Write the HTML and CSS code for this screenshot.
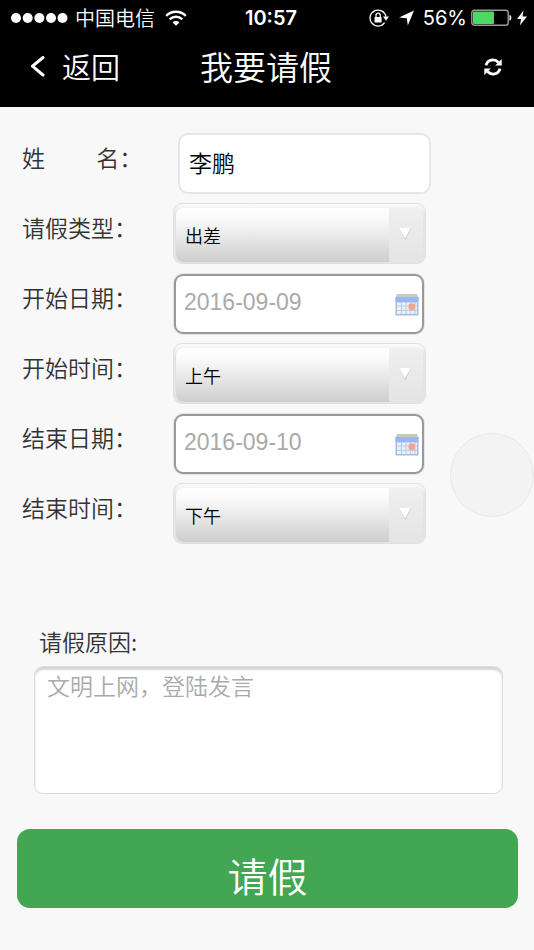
FILE: index.html
```html
<!DOCTYPE html>
<html lang="zh-CN">
<head>
<meta charset="utf-8">
<meta name="viewport" content="width=device-width, initial-scale=1">
<title>我要请假</title>
<link rel="stylesheet" href="styles.css">
</head>
<body>
<header class="top">
  <div class="status">
    <div class="status-left">
      <svg class="dots" width="57" height="12" viewBox="0 0 57 12" fill="#fff" aria-hidden="true"><circle cx="5" cy="6" r="5"/><circle cx="16.700" cy="6" r="5"/><circle cx="28.400" cy="6" r="5"/><circle cx="40" cy="6" r="5"/><circle cx="51.500" cy="6" r="5"/></svg>
      <span class="carrier">中国电信</span>
      <svg class="wifi" width="22" height="16" viewBox="0 0 22 16" fill="none" stroke="#fff" stroke-width="2.400" aria-hidden="true"><path d="M1.200 5.800a14 14 0 0 1 19.600 0M4.700 9.300a9 9 0 0 1 12.600 0"/><path d="M11 15.800 7.600 12.400a4.800 4.800 0 0 1 6.800 0z" fill="#fff" stroke="none"/></svg>
    </div>
    <time class="clock">10:57</time>
    <div class="status-right">
      <svg class="lock" width="20" height="18" viewBox="0 0 20 18" fill="none" stroke="#fff" aria-hidden="true"><path d="M15.600 13.700A8 8 0 1 1 16.900 7.500" stroke-width="1.300"/><path d="M14 7.500h6l-3 4.200z" fill="#fff" stroke="none"/><rect x="5.600" y="8" width="7" height="5.500" rx=".6" fill="#fff" stroke="none"/><path d="M7 8.500V6.300a2.100 2.100 0 0 1 4.200 0v2.200" stroke-width="1.300"/></svg>
      <svg class="arrow" width="15" height="16" viewBox="0 0 15 16" fill="#fff" aria-hidden="true"><path d="M15 .5 8.800 15.500 7.800 8.200 0 7.500z"/></svg>
      <span class="percent">56%</span>
      <svg class="battery" width="41" height="18" viewBox="0 0 41 18" aria-hidden="true"><rect x=".8" y="1.300" width="36.400" height="15" rx="2.500" fill="none" stroke="#9a9a9a" stroke-width="1.400"/><rect x="2" y="2.500" width="21" height="12.500" rx="1" fill="#4cd964"/><path d="M38.500 5.800c2.400.6 2.400 5.400 0 6z" fill="#fff"/></svg>
      <svg class="bolt" width="10" height="16" viewBox="0 0 10 16" fill="#fff" aria-hidden="true"><path d="M6.500.500 0 9h4.200L2.800 15.500 10 6.500H5.500z"/></svg>
    </div>
  </div>
  <nav class="nav">
    <a class="back" href="#">
      <svg width="15" height="22" viewBox="0 0 15 22" fill="none" stroke="#fff" stroke-width="3" stroke-linecap="round" stroke-linejoin="round" aria-hidden="true"><path d="M13 2.500 2.500 11.200 13 20"/></svg>
      <span>返回</span>
    </a>
    <h1 class="title">我要请假</h1>
    <button class="refresh" type="button" aria-label="刷新">
      <svg width="18" height="18" viewBox="0 0 18 18" aria-hidden="true"><g fill="none" stroke="#fff" stroke-width="2.800"><path d="M2 7.300C3.500 1.500 10.500.2 14.500 4.500"/><path d="M16 10.700C14.500 16.500 7.500 17.800 3.500 13.500"/></g><path d="M17.700 1v6.500h-6.500zM.300 17v-6.500h6.500z" fill="#fff"/></svg>
    </button>
  </nav>
</header>

<main>
  <form class="form">
    <div class="row">
      <label class="label" for="name">姓&nbsp;&nbsp;&nbsp;&nbsp;&nbsp;&nbsp;&nbsp;&nbsp;&nbsp;&nbsp;名：</label>
      <input class="name" id="name" type="text" value="李鹏">
    </div>
    <div class="row">
      <label class="label" for="type">请假类型：</label>
      <div class="picker">
        <select id="type"><option>出差</option></select>
        <span class="drop"><svg width="14" height="14" viewBox="0 0 14 14" aria-hidden="true"><path d="M1 1h12.500L7.300 13z" fill="#c4c4c4"/><path d="M1 1h12L7 11.500z" fill="#fff"/></svg></span>
      </div>
    </div>
    <div class="row">
      <label class="label" for="start-date">开始日期：</label>
      <div class="date">
        <input id="start-date" type="text" value="2016-09-09">
        <button type="button" aria-label="选择开始日期"><svg width="24" height="23" viewBox="0 0 24 23" aria-hidden="true"><path d="M2 1h20l1.500 4H.5z" fill="#c9c9c6"/><rect x=".5" y="4" width="23" height="18.500" fill="#a9bcdb"/><rect x=".5" y="4" width="23" height="5" fill="#9ab6f3"/><path d="M2 9.500h20V21H2z" fill="#eaf1fa"/><path d="M6.500 9v12M11 9v12M15.500 9v12M20 9v12M2 13h20M2 17.500h20" stroke="#bccde6" stroke-width="1.200"/><rect x="13.500" y="10.500" width="6.500" height="6.500" rx="2" fill="#f0a48c"/></svg></button>
      </div>
    </div>
    <div class="row">
      <label class="label" for="start-time">开始时间：</label>
      <div class="picker">
        <select id="start-time"><option>上午</option><option>下午</option></select>
        <span class="drop"><svg width="14" height="14" viewBox="0 0 14 14" aria-hidden="true"><path d="M1 1h12.500L7.300 13z" fill="#c4c4c4"/><path d="M1 1h12L7 11.500z" fill="#fff"/></svg></span>
      </div>
    </div>
    <div class="row">
      <label class="label" for="end-date">结束日期：</label>
      <div class="date">
        <input id="end-date" type="text" value="2016-09-10">
        <button type="button" aria-label="选择结束日期"><svg width="24" height="23" viewBox="0 0 24 23" aria-hidden="true"><path d="M2 1h20l1.500 4H.5z" fill="#c9c9c6"/><rect x=".5" y="4" width="23" height="18.500" fill="#a9bcdb"/><rect x=".5" y="4" width="23" height="5" fill="#9ab6f3"/><path d="M2 9.500h20V21H2z" fill="#eaf1fa"/><path d="M6.500 9v12M11 9v12M15.500 9v12M20 9v12M2 13h20M2 17.500h20" stroke="#bccde6" stroke-width="1.200"/><rect x="13.500" y="10.500" width="6.500" height="6.500" rx="2" fill="#f0a48c"/></svg></button>
      </div>
    </div>
    <div class="row">
      <label class="label" for="end-time">结束时间：</label>
      <div class="picker">
        <select id="end-time"><option>下午</option><option>上午</option></select>
        <span class="drop"><svg width="14" height="14" viewBox="0 0 14 14" aria-hidden="true"><path d="M1 1h12.500L7.300 13z" fill="#c4c4c4"/><path d="M1 1h12L7 11.500z" fill="#fff"/></svg></span>
      </div>
    </div>
    <div class="reason">
      <label for="reason">请假原因:</label>
      <textarea id="reason" placeholder="文明上网，登陆发言"></textarea>
    </div>
    <button class="submit" type="submit">请假</button>
  </form>
</main>
<div class="assist" aria-hidden="true"></div>
</body>
</html>
```
FILE: styles.css
```css
* {
  box-sizing: border-box;
}

body {
  margin: 0;
  min-height: 100vh;
  position: relative;
  background: #f8f8f8;
  color: #333;
  font-family: "Noto Sans CJK SC", sans-serif;
  font-size: 23px;
  font-weight: 350;
}

input,
select,
textarea,
button {
  margin: 0;
  font: inherit;
  appearance: none;
}

svg {
  display: block;
  flex: none;
}

.top {
  height: 107px;
  background: #000;
  color: #fff;
}

/* Status bar */

.status {
  display: grid;
  grid-template-columns: 1fr auto 1fr;
  align-items: center;
  height: 35px;
  padding: 0 7px 0 11px;
  font-size: 20px;
}

.status-left,
.status-right {
  display: flex;
  align-items: center;
}

.status-right {
  justify-content: flex-end;
}

.carrier {
  margin: 0 10px 0 7px;
}

.clock {
  padding-left: 4px;
  font-family: Inter, sans-serif;
  font-weight: 600;
}

.percent {
  margin: 0 4px 0 9px;
  font-family: Inter, sans-serif;
  font-weight: 400;
}

.arrow {
  margin-left: 10px;
}

.bolt {
  margin-left: 5px;
}

/* Title bar */

.nav {
  display: grid;
  grid-template-columns: 1fr auto 1fr;
  align-items: center;
  height: 62px;
  padding: 0 32px 0 30px;
}

.back {
  display: flex;
  align-items: center;
  gap: 17px;
  color: #fff;
  font-size: 29px;
  text-decoration: none;
}

.title {
  margin: 0;
  font-size: 33px;
  font-weight: inherit;
}

.refresh {
  justify-self: end;
  padding: 2px 0 0;
  border: 0;
  background: none;
}

/* Form */

.form {
  padding: 26px 16px 42px 17px;
}

.row {
  display: grid;
  grid-template-columns: 151px minmax(0, 1fr);
  align-items: start;
  height: 70px;
  padding: 0 92px 0 5px;
}

.label {
  line-height: 48px;
}

.name {
  width: 100%;
  height: 61px;
  padding: 0 9px 3px;
  position: relative;
  left: 5px;
  border: 2px solid #e6e6e6;
  border-radius: 10px;
  background: #fff;
  color: #000;
}

.picker {
  display: flex;
  height: 61px;
  padding: 4px 2px 1px;
  border: 1px solid #e0e0e0;
  border-radius: 9px;
  background: linear-gradient(#fbfbfb, #e4e4e4 20%);
}

.picker select {
  flex: 1;
  min-width: 0;
  padding: 0 9px;
  border: 0;
  border-radius: 8px 0 0 8px;
  background: linear-gradient(#fff, #fafafa 20%, #cecece);
  color: #000;
  font-size: 18px;
}

.drop {
  display: grid;
  place-items: center;
  width: 34px;
  padding: 0 3px 3px 0;
  border-radius: 0 8px 8px 0;
  background: linear-gradient(#efefef, #e4e4e4);
}

.date {
  display: flex;
  align-items: center;
  height: 60px;
  margin: 1px 2px 0 1px;
  border: 2px solid #999;
  border-radius: 9px;
  background: #fff;
  box-shadow: 0 0 0 1px #e4e4e4;
}

.date input {
  flex: 1;
  min-width: 0;
  height: 52px;
  padding: 0 0 4px 8px;
  border: 0;
  background: none;
  color: #aaa;
  font-family: "Liberation Sans", sans-serif;
}

.date button {
  padding: 0 3px 0 0;
  border: 0;
  background: none;
}

.reason {
  display: flex;
  flex-direction: column;
  gap: 6px;
  padding: 70px 15px 35px 17px;
}

.reason label {
  padding-left: 5px;
  line-height: 37px;
}

.reason textarea {
  height: 128px;
  padding: 0 12px;
  border: 1px solid #dcdcdc;
  border-radius: 9px;
  background: #fff;
  box-shadow: inset 0 3px 2px #d4d4d4;
  line-height: 36px;
  resize: none;
}

.reason textarea::placeholder {
  color: #aaa;
}

.submit {
  display: block;
  width: 100%;
  height: 79px;
  padding: 12px 0 0;
  border: 0;
  border-radius: 13px;
  background: #42a652;
  color: #fff;
  font-size: 40px;
  line-height: 60px;
}

/* Floating touch button over the page */

.assist {
  position: absolute;
  top: 433px;
  right: 0;
  width: 84px;
  height: 84px;
  border: 1px solid #e8e8e8;
  border-radius: 50%;
  background: #f3f3f3;
}
```
